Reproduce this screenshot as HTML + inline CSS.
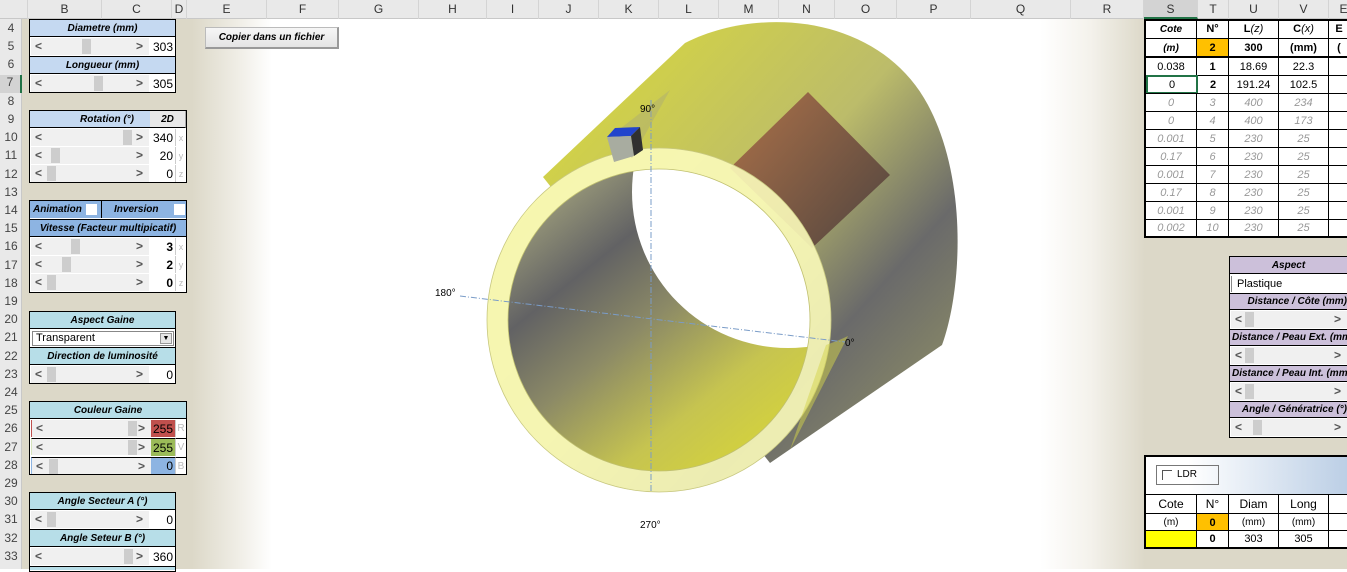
<!DOCTYPE html>
<html><head><meta charset="utf-8"><style>
*{margin:0;padding:0;box-sizing:border-box}
body{width:1347px;height:569px;overflow:hidden;position:relative;background:#fff;font-family:"Liberation Sans",sans-serif;font-size:11px;color:#000}
.a{position:absolute}
.c{position:absolute;display:flex;align-items:center;justify-content:center;white-space:nowrap;overflow:hidden}
.h{font-weight:bold;font-style:italic;font-size:10px}
.rn{position:absolute;left:0;width:22px;text-align:center;font-size:12px;color:#444}
.cl{position:absolute;top:0;height:19px;line-height:19px;text-align:center;font-size:12px;color:#333;border-right:1px solid #d4d4d4}
.sb{position:absolute;background:#f0f0f0;height:17px}
.sb .l,.sb .r{position:absolute;top:1px;font-size:12px;color:#555;font-weight:bold}
.sb .l{left:4px}.sb .r{right:6px}
.sb .t{position:absolute;top:1px;width:9px;height:15px;background:#cdcdcd}
.v{position:absolute;display:flex;align-items:center;justify-content:flex-end;padding-right:2px;font-size:12px}
.g{color:#999;font-style:italic}
</style></head><body>
<div class="a" style="left:22px;top:19px;width:250px;height:550px;background:linear-gradient(90deg,#dcd8c8 0,#dcd8c8 170px,#efede5 215px,#fff 250px)"></div>
<div class="a" style="left:1040px;top:19px;width:307px;height:550px;background:linear-gradient(90deg,#fff 0,#f4f2ec 50px,#dcd8c8 105px,#dcd8c8 307px)"></div>

<div class="a" style="left:0;top:0;width:1347px;height:19px;background:#e9e9e9;border-bottom:1px solid #c8c8c8"></div>
<div class="a" style="left:0;top:19px;width:22px;height:550px;background:#e9e9e9;border-right:1px solid #c8c8c8"></div>
<div class="cl" style="left:22px;width:6px"></div>
<div class="cl" style="left:28px;width:74px">B</div>
<div class="cl" style="left:102px;width:70px">C</div>
<div class="cl" style="left:172px;width:15px">D</div>
<div class="cl" style="left:187px;width:80px">E</div>
<div class="cl" style="left:267px;width:72px">F</div>
<div class="cl" style="left:339px;width:80px">G</div>
<div class="cl" style="left:419px;width:68px">H</div>
<div class="cl" style="left:487px;width:52px">I</div>
<div class="cl" style="left:539px;width:60px">J</div>
<div class="cl" style="left:599px;width:60px">K</div>
<div class="cl" style="left:659px;width:60px">L</div>
<div class="cl" style="left:719px;width:60px">M</div>
<div class="cl" style="left:779px;width:56px">N</div>
<div class="cl" style="left:835px;width:62px">O</div>
<div class="cl" style="left:897px;width:74px">P</div>
<div class="cl" style="left:971px;width:100px">Q</div>
<div class="cl" style="left:1071px;width:73px">R</div>
<div class="cl" style="left:1144px;width:54px;background:#d3d3d3;border-bottom:2px solid #217346">S</div>
<div class="cl" style="left:1198px;width:31px">T</div>
<div class="cl" style="left:1229px;width:50px">U</div>
<div class="cl" style="left:1279px;width:50px">V</div>
<div class="cl" style="left:1329px;width:30px">E</div>

<div class="rn" style="top:21px">4</div><div class="rn" style="top:39px">5</div><div class="rn" style="top:57px">6</div><div class="rn" style="top:75px;background:#d3d3d3;border-right:2px solid #217346;height:18px">7</div>
<div class="rn" style="top:94px">8</div><div class="rn" style="top:112px">9</div><div class="rn" style="top:130px">10</div><div class="rn" style="top:148px">11</div><div class="rn" style="top:167px">12</div><div class="rn" style="top:185px">13</div><div class="rn" style="top:203px">14</div><div class="rn" style="top:221px">15</div><div class="rn" style="top:239px">16</div><div class="rn" style="top:258px">17</div><div class="rn" style="top:276px">18</div><div class="rn" style="top:294px">19</div><div class="rn" style="top:312px">20</div><div class="rn" style="top:330px">21</div><div class="rn" style="top:349px">22</div><div class="rn" style="top:367px">23</div><div class="rn" style="top:385px">24</div><div class="rn" style="top:403px">25</div><div class="rn" style="top:421px">26</div><div class="rn" style="top:440px">27</div><div class="rn" style="top:458px">28</div><div class="rn" style="top:476px">29</div><div class="rn" style="top:494px">30</div><div class="rn" style="top:512px">31</div><div class="rn" style="top:531px">32</div><div class="rn" style="top:549px">33</div>

<div class="a" style="left:29px;top:19px;width:147px;height:74px;border:1px solid #000;background:#fff"></div>
<div class="c h" style="left:30px;top:20px;width:145px;height:17px;background:#c5d9f1;border-bottom:1px solid #000">Diametre (mm)</div>
<div class="sb" style="left:31px;top:38px;width:118px"><span class="l">&lt;</span><span class="t" style="left:51px"></span><span class="r">&gt;</span></div>
<div class="v" style="left:149px;top:38px;width:26px;height:17px">303</div>
<div class="c h" style="left:30px;top:56px;width:145px;height:18px;background:#c5d9f1;border-top:1px solid #000;border-bottom:1px solid #000">Longueur (mm)</div>
<div class="sb" style="left:31px;top:75px;width:118px"><span class="l">&lt;</span><span class="t" style="left:63px"></span><span class="r">&gt;</span></div>
<div class="v" style="left:149px;top:75px;width:26px;height:17px">305</div>

<div class="a" style="left:29px;top:110px;width:158px;height:73px;border:1px solid #000;background:#fff"></div>
<div class="c h" style="left:30px;top:111px;width:120px;height:17px;background:#c5d9f1;border-bottom:1px solid #000;justify-content:flex-end;padding-right:16px">Rotation (°)</div>
<div class="c h" style="left:150px;top:111px;width:36px;height:17px;background:#e8e8e8;border-bottom:1px solid #000;border-right:1px solid #aaa">2D</div>
<div class="sb" style="left:31px;top:129px;width:118px"><span class="l">&lt;</span><span class="t" style="left:92px"></span><span class="r">&gt;</span></div>
<div class="v" style="left:149px;top:129px;width:26px;height:17px">340</div>
<div class="c" style="left:175px;top:129px;width:11px;height:17px;border-left:1px solid #ccc;color:#bbb;font-size:9px">x</div>
<div class="sb" style="left:31px;top:147px;width:118px"><span class="l">&lt;</span><span class="t" style="left:20px"></span><span class="r">&gt;</span></div>
<div class="v" style="left:149px;top:147px;width:26px;height:17px">20</div>
<div class="c" style="left:175px;top:147px;width:11px;height:17px;border-left:1px solid #ccc;color:#bbb;font-size:9px">y</div>
<div class="sb" style="left:31px;top:165px;width:118px"><span class="l">&lt;</span><span class="t" style="left:16px"></span><span class="r">&gt;</span></div>
<div class="v" style="left:149px;top:165px;width:26px;height:17px">0</div>
<div class="c" style="left:175px;top:165px;width:11px;height:17px;border-left:1px solid #ccc;color:#bbb;font-size:9px">z</div>

<div class="a" style="left:29px;top:200px;width:158px;height:93px;border:1px solid #000;background:#fff"></div>
<div class="c h" style="left:30px;top:201px;width:72px;height:17px;background:#8db4e2;border-right:1px solid #000;justify-content:flex-start;padding-left:3px">Animation <span style="display:inline-block;width:11px;height:11px;background:#fff;margin-left:4px"></span></div>
<div class="c h" style="left:102px;top:201px;width:84px;height:17px;background:#8db4e2;justify-content:flex-start;padding-left:12px">Inversion <span style="display:inline-block;width:11px;height:11px;background:#fff;margin-left:16px"></span></div>
<div class="c h" style="left:30px;top:219px;width:156px;height:18px;background:#8db4e2;border-top:1px solid #000;border-bottom:1px solid #000">Vitesse (Facteur multipicatif)</div>
<div class="sb" style="left:31px;top:238px;width:118px"><span class="l">&lt;</span><span class="t" style="left:40px"></span><span class="r">&gt;</span></div>
<div class="v" style="left:149px;top:238px;width:26px;height:17px;font-weight:bold">3</div>
<div class="c" style="left:175px;top:238px;width:11px;height:17px;border-left:1px solid #ccc;color:#bbb;font-size:9px">x</div>
<div class="sb" style="left:31px;top:256px;width:118px"><span class="l">&lt;</span><span class="t" style="left:31px"></span><span class="r">&gt;</span></div>
<div class="v" style="left:149px;top:256px;width:26px;height:17px;font-weight:bold">2</div>
<div class="c" style="left:175px;top:256px;width:11px;height:17px;border-left:1px solid #ccc;color:#bbb;font-size:9px">y</div>
<div class="sb" style="left:31px;top:274px;width:118px"><span class="l">&lt;</span><span class="t" style="left:16px"></span><span class="r">&gt;</span></div>
<div class="v" style="left:149px;top:274px;width:26px;height:17px;font-weight:bold">0</div>
<div class="c" style="left:175px;top:274px;width:11px;height:17px;border-left:1px solid #ccc;color:#bbb;font-size:9px">z</div>

<div class="a" style="left:29px;top:311px;width:147px;height:73px;border:1px solid #000;background:#fff"></div>
<div class="c h" style="left:30px;top:312px;width:145px;height:17px;background:#b7dee8;border-bottom:1px solid #000">Aspect Gaine</div>
<div class="a" style="left:32px;top:331px;width:142px;height:15px;border:1px solid #888;background:#fff;font-size:11px;line-height:13px;padding-left:3px">Transparent<span style="position:absolute;right:1px;top:1px;width:12px;height:11px;background:#e6e6e6;border:1px solid #999;font-size:7px;line-height:9px;text-align:center">▼</span></div>
<div class="c h" style="left:30px;top:347px;width:145px;height:18px;background:#b7dee8;border-top:1px solid #000;border-bottom:1px solid #000">Direction de luminosité</div>
<div class="sb" style="left:31px;top:366px;width:118px"><span class="l">&lt;</span><span class="t" style="left:16px"></span><span class="r">&gt;</span></div>
<div class="v" style="left:149px;top:366px;width:26px;height:17px">0</div>

<div class="a" style="left:29px;top:401px;width:158px;height:74px;border:1px solid #000;background:#fff"></div>
<div class="c h" style="left:30px;top:402px;width:156px;height:17px;background:#b7dee8;border-bottom:1px solid #000">Couleur Gaine</div>
<div class="sb" style="left:31px;top:420px;width:120px;border-left:1px solid #c0504d"><span class="l">&lt;</span><span class="t" style="left:96px"></span><span class="r">&gt;</span></div>
<div class="v" style="left:151px;top:420px;width:24px;height:17px;background:#c0504d">255</div>
<div class="c" style="left:175px;top:420px;width:11px;height:17px;border-left:1px solid #ccc;color:#bbb;font-size:10px">R</div>
<div class="sb" style="left:31px;top:438px;width:120px;border-left:1px solid #d6e3bc;border-top:1px solid #000"><span class="l">&lt;</span><span class="t" style="left:96px"></span><span class="r">&gt;</span></div>
<div class="v" style="left:151px;top:438px;width:24px;height:18px;background:#9bbb59;border-top:1px solid #000">255</div>
<div class="c" style="left:175px;top:438px;width:11px;height:18px;border-left:1px solid #ccc;border-top:1px solid #000;color:#bbb;font-size:10px">V</div>
<div class="sb" style="left:31px;top:457px;width:120px;border-top:1px solid #000;border-left:1px solid #8db4e2"><span class="l">&lt;</span><span class="t" style="left:17px"></span><span class="r">&gt;</span></div>
<div class="v" style="left:151px;top:457px;width:24px;height:17px;background:#8db4e2;border-top:1px solid #000">0</div>
<div class="c" style="left:175px;top:457px;width:11px;height:17px;border-left:1px solid #ccc;border-top:1px solid #000;color:#bbb;font-size:10px">B</div>

<div class="a" style="left:29px;top:492px;width:147px;height:80px;border:1px solid #000;background:#fff"></div>
<div class="c h" style="left:30px;top:493px;width:145px;height:17px;background:#b7dee8;border-bottom:1px solid #000">Angle Secteur A (°)</div>
<div class="sb" style="left:31px;top:511px;width:118px"><span class="l">&lt;</span><span class="t" style="left:16px"></span><span class="r">&gt;</span></div>
<div class="v" style="left:149px;top:511px;width:26px;height:17px">0</div>
<div class="c h" style="left:30px;top:529px;width:145px;height:18px;background:#b7dee8;border-top:1px solid #000;border-bottom:1px solid #000">Angle Seteur B (°)</div>
<div class="sb" style="left:31px;top:548px;width:118px"><span class="l">&lt;</span><span class="t" style="left:93px"></span><span class="r">&gt;</span></div>
<div class="v" style="left:149px;top:548px;width:26px;height:17px">360</div>
<div class="a" style="left:30px;top:566px;width:145px;height:4px;background:#b7dee8;border-top:1px solid #000"></div>

<div class="c h" style="left:205px;top:27px;width:134px;height:22px;background:linear-gradient(#f6f6f6,#e4e4e4);border:1px solid #bbb;border-right:2px solid #999;border-bottom:2px solid #999">Copier dans un fichier</div>

<svg class="a" style="left:0;top:0" width="1347" height="569" viewBox="0 0 1347 569">
<defs>
<linearGradient id="body" x1="650" y1="60" x2="950" y2="330" gradientUnits="userSpaceOnUse">
<stop offset="0" stop-color="#d0d04a"/><stop offset="0.45" stop-color="#bcbc6a"/><stop offset="0.8" stop-color="#6a6a6a"/><stop offset="1" stop-color="#808068"/></linearGradient>
<linearGradient id="inner" x1="520" y1="220" x2="720" y2="470" gradientUnits="userSpaceOnUse">
<stop offset="0" stop-color="#9a9a7a"/><stop offset="0.25" stop-color="#626264"/><stop offset="0.5" stop-color="#8c8a66"/><stop offset="0.8" stop-color="#c6c450"/><stop offset="1" stop-color="#d2d040"/></linearGradient>
<linearGradient id="br" x1="740" y1="110" x2="880" y2="230" gradientUnits="userSpaceOnUse">
<stop offset="0" stop-color="#a66e48"/><stop offset="1" stop-color="#574840"/></linearGradient>
<clipPath id="fi"><circle cx="659" cy="320" r="151"/></clipPath>
<mask id="ring"><rect width="1347" height="569" fill="#fff"/><circle cx="659" cy="320" r="151" fill="#000"/></mask>
</defs>
<path d="M543,177 L685,43 C760,5 880,15 928,105 C968,180 962,290 942,345 L770,463 Z" fill="url(#body)"/>
<circle cx="659" cy="320" r="172" fill="url(#body)"/>
<circle cx="659" cy="320" r="151" fill="url(#inner)"/>
<g clip-path="url(#fi)"><circle cx="788" cy="192" r="156" fill="#fff"/></g>
<path d="M730,168 L808,92 L890,175 L812,248 Z" fill="url(#br)"/>
<circle cx="659" cy="320" r="172" fill="#fbfbba" fill-opacity="0.9" mask="url(#ring)"/>
<circle cx="659" cy="320" r="172" fill="none" stroke="#c8c880" stroke-width="0.8"/>
<circle cx="659" cy="320" r="151" fill="none" stroke="#c0c070" stroke-width="0.8"/>
<path d="M826,345 Q840,340 848,336 L790,450 Q800,420 826,345Z" fill="#d4d44a" fill-opacity="0.5"/>
<line x1="651" y1="100" x2="651" y2="492" stroke="#7a9cc8" stroke-width="1" stroke-dasharray="6,2,1,2"/>
<line x1="460" y1="296" x2="845" y2="342" stroke="#7a9cc8" stroke-width="1" stroke-dasharray="6,2,1,2"/>
<polygon points="612,135 670,90 632,158" fill="#a0a080" fill-opacity="0.35"/>
<polygon points="607,137 615,128 640,127 631,136" fill="#2244cc"/>
<polygon points="607,137 631,136 634,156 614,162" fill="#a8aca0"/>
<polygon points="631,136 640,127 643,150 634,156" fill="#303030"/>
<text x="640" y="112" font-size="10" font-family="Liberation Sans">90°</text>
<text x="435" y="296" font-size="10" font-family="Liberation Sans">180°</text>
<text x="845" y="346" font-size="10" font-family="Liberation Sans">0°</text>
<text x="640" y="528" font-size="10" font-family="Liberation Sans">270°</text>
</svg>

<div class="a" style="left:1144px;top:19px;width:210px;height:219px;border:2px solid #000;background:#fff"></div>
<div class="c h" style="left:1146px;top:20px;width:51px;height:18px;border-right:1px solid #000">Cote</div>
<div class="c" style="left:1197px;top:20px;width:32px;height:18px;border-right:1px solid #000;font-weight:bold">N°</div>
<div class="c" style="left:1229px;top:20px;width:50px;height:18px;border-right:1px solid #000;font-weight:bold">L <i style="font-weight:normal">(z)</i></div>
<div class="c" style="left:1279px;top:20px;width:50px;height:18px;border-right:1px solid #000;font-weight:bold">C <i style="font-weight:normal">(x)</i></div>
<div class="c" style="left:1329px;top:20px;width:20px;height:18px;font-weight:bold">E</div>
<div class="a" style="left:1146px;top:38px;width:210px;height:1px;background:#000"></div>
<div class="c h" style="left:1146px;top:39px;width:51px;height:18px;border-right:1px solid #000">(m)</div>
<div class="c" style="left:1197px;top:39px;width:32px;height:18px;border-right:1px solid #000;font-weight:bold;background:#ffc000">2</div>
<div class="c" style="left:1229px;top:39px;width:50px;height:18px;border-right:1px solid #000;font-weight:bold">300</div>
<div class="c" style="left:1279px;top:39px;width:50px;height:18px;border-right:1px solid #000;font-weight:bold">(mm)</div>
<div class="c" style="left:1329px;top:39px;width:20px;height:18px;font-weight:bold">(</div>
<div class="a" style="left:1146px;top:56px;width:210px;height:2px;background:#000"></div>
<div class="c" style="left:1146px;top:58px;width:51px;height:17px;border-right:1px solid #000">0.038</div>
<div class="c" style="left:1197px;top:58px;width:32px;height:17px;border-right:1px solid #000;font-weight:bold">1</div>
<div class="c" style="left:1229px;top:58px;width:50px;height:17px;border-right:1px solid #000">18.69</div>
<div class="c" style="left:1279px;top:58px;width:50px;height:17px;border-right:1px solid #000">22.3</div>
<div class="a" style="left:1146px;top:75px;width:210px;height:1px;background:#000"></div>
<div class="c" style="left:1146px;top:75px;width:52px;height:19px;border:2px solid #217346">0</div>
<div class="c" style="left:1198px;top:76px;width:31px;height:17px;border-right:1px solid #000;font-weight:bold">2</div>
<div class="c" style="left:1229px;top:76px;width:50px;height:17px;border-right:1px solid #000">191.24</div>
<div class="c" style="left:1279px;top:76px;width:50px;height:17px;border-right:1px solid #000">102.5</div>
<div class="a" style="left:1146px;top:93px;width:210px;height:1px;background:#000"></div>

<div class="c g" style="left:1146px;top:94px;width:51px;height:17px;border-right:1px solid #000">0</div><div class="c g" style="left:1197px;top:94px;width:32px;height:17px;border-right:1px solid #000">3</div><div class="c g" style="left:1229px;top:94px;width:50px;height:17px;border-right:1px solid #000">400</div><div class="c g" style="left:1279px;top:94px;width:50px;height:17px;border-right:1px solid #000">234</div><div class="a" style="left:1146px;top:111px;width:210px;height:1px;background:#000"></div>
<div class="c g" style="left:1146px;top:112px;width:51px;height:17px;border-right:1px solid #000">0</div><div class="c g" style="left:1197px;top:112px;width:32px;height:17px;border-right:1px solid #000">4</div><div class="c g" style="left:1229px;top:112px;width:50px;height:17px;border-right:1px solid #000">400</div><div class="c g" style="left:1279px;top:112px;width:50px;height:17px;border-right:1px solid #000">173</div><div class="a" style="left:1146px;top:129px;width:210px;height:1px;background:#000"></div>
<div class="c g" style="left:1146px;top:130px;width:51px;height:17px;border-right:1px solid #000">0.001</div><div class="c g" style="left:1197px;top:130px;width:32px;height:17px;border-right:1px solid #000">5</div><div class="c g" style="left:1229px;top:130px;width:50px;height:17px;border-right:1px solid #000">230</div><div class="c g" style="left:1279px;top:130px;width:50px;height:17px;border-right:1px solid #000">25</div><div class="a" style="left:1146px;top:147px;width:210px;height:1px;background:#000"></div>
<div class="c g" style="left:1146px;top:148px;width:51px;height:17px;border-right:1px solid #000">0.17</div><div class="c g" style="left:1197px;top:148px;width:32px;height:17px;border-right:1px solid #000">6</div><div class="c g" style="left:1229px;top:148px;width:50px;height:17px;border-right:1px solid #000">230</div><div class="c g" style="left:1279px;top:148px;width:50px;height:17px;border-right:1px solid #000">25</div><div class="a" style="left:1146px;top:165px;width:210px;height:1px;background:#000"></div>
<div class="c g" style="left:1146px;top:166px;width:51px;height:17px;border-right:1px solid #000">0.001</div><div class="c g" style="left:1197px;top:166px;width:32px;height:17px;border-right:1px solid #000">7</div><div class="c g" style="left:1229px;top:166px;width:50px;height:17px;border-right:1px solid #000">230</div><div class="c g" style="left:1279px;top:166px;width:50px;height:17px;border-right:1px solid #000">25</div><div class="a" style="left:1146px;top:183px;width:210px;height:1px;background:#000"></div>
<div class="c g" style="left:1146px;top:184px;width:51px;height:17px;border-right:1px solid #000">0.17</div><div class="c g" style="left:1197px;top:184px;width:32px;height:17px;border-right:1px solid #000">8</div><div class="c g" style="left:1229px;top:184px;width:50px;height:17px;border-right:1px solid #000">230</div><div class="c g" style="left:1279px;top:184px;width:50px;height:17px;border-right:1px solid #000">25</div><div class="a" style="left:1146px;top:201px;width:210px;height:1px;background:#000"></div>
<div class="c g" style="left:1146px;top:202px;width:51px;height:17px;border-right:1px solid #000">0.001</div><div class="c g" style="left:1197px;top:202px;width:32px;height:17px;border-right:1px solid #000">9</div><div class="c g" style="left:1229px;top:202px;width:50px;height:17px;border-right:1px solid #000">230</div><div class="c g" style="left:1279px;top:202px;width:50px;height:17px;border-right:1px solid #000">25</div><div class="a" style="left:1146px;top:219px;width:210px;height:1px;background:#000"></div>
<div class="c g" style="left:1146px;top:220px;width:51px;height:16px;border-right:1px solid #000">0.002</div><div class="c g" style="left:1197px;top:220px;width:32px;height:16px;border-right:1px solid #000">10</div><div class="c g" style="left:1229px;top:220px;width:50px;height:16px;border-right:1px solid #000">230</div><div class="c g" style="left:1279px;top:220px;width:50px;height:16px;border-right:1px solid #000">25</div>

<div class="a" style="left:1229px;top:256px;width:130px;height:182px;border:1px solid #000;background:#fff"></div>
<div class="c h" style="left:1230px;top:257px;width:117px;height:17px;background:#ccc0da;border-bottom:1px solid #000">Aspect</div>
<div class="a" style="left:1231px;top:276px;width:120px;height:16px;border-left:1px solid #888;padding-left:5px;font-size:11px;line-height:16px">Plastique</div>
<div class="c h" style="left:1230px;top:293px;width:117px;height:17px;background:#ccc0da;border-top:1px solid #000;border-bottom:1px solid #000;justify-content:flex-end">Distance / Côte (mm)</div>
<div class="sb" style="left:1231px;top:311px;width:116px"><span class="l">&lt;</span><span class="t" style="left:14px"></span><span class="r">&gt;</span></div>
<div class="c h" style="left:1230px;top:329px;width:117px;height:17px;background:#ccc0da;border-top:1px solid #000;border-bottom:1px solid #000;justify-content:flex-start;padding-left:2px">Distance / Peau Ext. (mm</div>
<div class="sb" style="left:1231px;top:347px;width:116px"><span class="l">&lt;</span><span class="t" style="left:14px"></span><span class="r">&gt;</span></div>
<div class="c h" style="left:1230px;top:365px;width:117px;height:17px;background:#ccc0da;border-top:1px solid #000;border-bottom:1px solid #000;justify-content:flex-start;padding-left:2px">Distance / Peau Int. (mm</div>
<div class="sb" style="left:1231px;top:383px;width:116px"><span class="l">&lt;</span><span class="t" style="left:14px"></span><span class="r">&gt;</span></div>
<div class="c h" style="left:1230px;top:401px;width:117px;height:17px;background:#ccc0da;border-top:1px solid #000;border-bottom:1px solid #000;justify-content:flex-end">Angle / Génératrice (°)</div>
<div class="sb" style="left:1231px;top:419px;width:116px"><span class="l">&lt;</span><span class="t" style="left:22px"></span><span class="r">&gt;</span></div>

<div class="a" style="left:1144px;top:455px;width:210px;height:94px;border:2px solid #000;background:#fff"></div>
<div class="a" style="left:1146px;top:457px;width:210px;height:37px;background:linear-gradient(90deg,#fff 20%,#b8cce4 100%)"></div>
<div class="a" style="left:1156px;top:465px;width:63px;height:20px;border:1px solid #777;font-size:10px;line-height:18px;padding-left:20px">LDR<span style="position:absolute;left:5px;top:4px;width:10px;height:10px;border-left:1px solid #555;border-top:1px solid #555"></span></div>
<div class="a" style="left:1146px;top:494px;width:210px;height:1px;background:#000"></div>
<div class="c" style="left:1146px;top:495px;width:51px;height:18px;border-right:1px solid #000;font-size:12px">Cote</div>
<div class="c" style="left:1197px;top:495px;width:32px;height:18px;border-right:1px solid #000;font-size:12px">N°</div>
<div class="c" style="left:1229px;top:495px;width:50px;height:18px;border-right:1px solid #000;font-size:12px">Diam</div>
<div class="c" style="left:1279px;top:495px;width:50px;height:18px;border-right:1px solid #000;font-size:12px">Long</div>
<div class="a" style="left:1146px;top:513px;width:210px;height:1px;background:#000"></div>
<div class="c" style="left:1146px;top:514px;width:51px;height:17px;border-right:1px solid #000;font-size:10px">(m)</div>
<div class="c" style="left:1197px;top:514px;width:32px;height:17px;border-right:1px solid #000;background:#ffc000;font-weight:bold">0</div>
<div class="c" style="left:1229px;top:514px;width:50px;height:17px;border-right:1px solid #000;font-size:10px">(mm)</div>
<div class="c" style="left:1279px;top:514px;width:50px;height:17px;border-right:1px solid #000;font-size:10px">(mm)</div>
<div class="a" style="left:1146px;top:530px;width:210px;height:1px;background:#000"></div>
<div class="c" style="left:1146px;top:531px;width:51px;height:16px;border-right:1px solid #000;background:#ffff00"></div>
<div class="c" style="left:1197px;top:531px;width:32px;height:16px;border-right:1px solid #000;font-weight:bold">0</div>
<div class="c" style="left:1229px;top:531px;width:50px;height:16px;border-right:1px solid #000">303</div>
<div class="c" style="left:1279px;top:531px;width:50px;height:16px;border-right:1px solid #000">305</div>
</body></html>
